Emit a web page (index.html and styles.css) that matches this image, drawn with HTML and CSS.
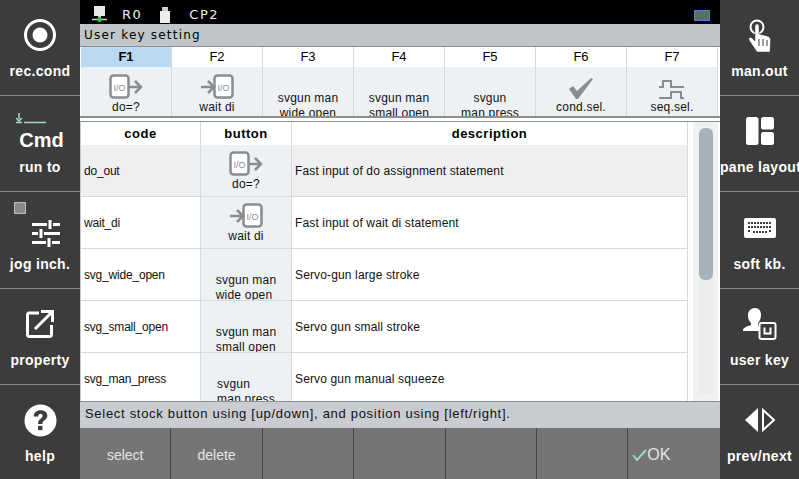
FILE: index.html
```html
<!DOCTYPE html>
<html lang="en">
<head>
    <meta charset="UTF-8">
    <title>User key setting</title>
    <link rel="stylesheet" href="styles.css">
</head>
<body>
<div class="screen">
    <div class="side">
        <div class="side-btn">
            <svg class="ic-rec" width="34" height="34" viewBox="0 0 34 34"><circle cx="17" cy="17" r="14.500" fill="none" stroke="#fff" stroke-width="3"/><circle cx="17" cy="17" r="7.500" fill="#fff"/></svg>
            <span>rec.cond</span>
        </div>
        <div class="side-btn">
            <svg class="run-mark" width="32" height="12" viewBox="0 0 32 12"><path d="M3 0v6M0 5l3 3 3-3M0 9.500H6M8 9.500H30" fill="none" stroke="#a5d8c0" stroke-width="1.500"/></svg>
            <b class="cmd">Cmd</b>
            <span>run to</span>
        </div>
        <div class="side-btn tall">
            <i class="jog-box"></i>
            <svg class="ic-jog" width="28" height="27" viewBox="0 0 28 27"><path d="M0 4.500H15M21 4.500H28M18 0V9M0 13.500H6M12 13.500H28M9 9V18M0 22.500H14M20 22.500H28M17 18V27" fill="none" stroke="#fff" stroke-width="3"/></svg>
            <span>jog inch.</span>
        </div>
        <div class="side-btn">
            <svg class="ic-prop" width="28" height="28" viewBox="0 0 28 28"><path d="M13 3H3a1.500 1.500 0 0 0-1.500 1.500V25A1.500 1.500 0 0 0 3 26.500h21a1.500 1.500 0 0 0 1.500-1.500V15" fill="none" stroke="#fff" stroke-width="3"/><path d="M9 19L25 3M15 1.500H26.500V12" fill="none" stroke="#fff" stroke-width="3"/></svg>
            <span>property</span>
        </div>
        <div class="side-btn">
            <svg class="ic-help" width="33" height="33" viewBox="0 0 34 34"><circle cx="17" cy="17" r="16.500" fill="#fff"/><path d="M10 13c0-4 3-6.500 7.200-6.500 4.100 0 6.800 2.400 6.800 5.700 0 4.300-5 4.500-5 8.300h-4.500c0-5.200 4.700-5.500 4.700-8.300 0-1.300-.9-2.200-2.200-2.200-1.400 0-2.300 1-2.400 3z" fill="#3c3c3c"/><rect x="14.500" y="22.500" width="4.500" height="4.500" fill="#3c3c3c"/></svg>
            <span>help</span>
        </div>
    </div>

    <div class="main">
        <div class="topbar">
            <svg width="15" height="16" viewBox="0 0 15 16"><rect x="2" y="0" width="11" height="10" fill="#e8e8e8"/><rect x="6" y="10" width="3" height="3" fill="#ccc"/><path d="M0 13.500H15" stroke="#ccc" stroke-width="1.500"/><circle cx="7.500" cy="13.500" r="2.500" fill="#22c83a"/></svg>
            <span class="top-r">R0</span>
            <svg class="top-usb" width="10" height="16" viewBox="0 0 10 16"><rect x="2" y="0" width="6" height="4" fill="#ccc"/><rect x="0" y="4" width="10" height="12" fill="#eee"/></svg>
            <span class="top-cp">CP2</span>
            <i class="top-mem"></i>
        </div>
        <div class="title">User key setting</div>

        <div class="tabs">
            <div class="tab on"><div class="tab-key">F1</div><div class="tab-body">
                <svg class="tab-svg" width="34" height="26" viewBox="0 0 34 26"><rect x="1.500" y="1.500" width="18" height="22" rx="3" fill="#fff" stroke="#8a8c90" stroke-width="2.500"/><text x="10.500" y="17" text-anchor="middle" class="io-text">I/O</text><path d="M20 13H32M26 7l6 6-6 6" fill="none" stroke="#8a8c90" stroke-width="2.500"/></svg>
                <em>do=?</em></div></div>
            <div class="tab"><div class="tab-key">F2</div><div class="tab-body">
                <svg class="tab-svg" width="34" height="26" viewBox="0 0 34 26"><rect x="14.500" y="1.500" width="18" height="22" rx="3" fill="#fff" stroke="#8a8c90" stroke-width="2.500"/><text x="23.500" y="17" text-anchor="middle" class="io-text">I/O</text><path d="M1 13H14M8 7l6 6-6 6" fill="none" stroke="#8a8c90" stroke-width="2.500"/></svg>
                <em>wait di</em></div></div>
            <div class="tab"><div class="tab-key">F3</div><div class="tab-body"><em class="two">svgun man<br>wide open</em></div></div>
            <div class="tab"><div class="tab-key">F4</div><div class="tab-body"><em class="two">svgun man<br>small open</em></div></div>
            <div class="tab"><div class="tab-key">F5</div><div class="tab-body"><em class="two">svgun<br>man press</em></div></div>
            <div class="tab"><div class="tab-key">F6</div><div class="tab-body"><svg class="tab-svg" width="26" height="22" viewBox="0 0 26 22"><path d="M1 11l4-3 4 5L23 0l2 1L10 21H8z" fill="#8a8c90"/></svg><em>cond.sel.</em></div></div>
            <div class="tab"><div class="tab-key">F7</div><div class="tab-body"><svg class="tab-svg" width="26" height="20" viewBox="0 0 26 20"><path d="M0 7H4V1H12V7H25M0 18H12V12H22V18H25" fill="none" stroke="#8a8c90" stroke-width="2"/></svg><em>seq.sel.</em></div></div>
        </div>

        <div class="list">
            <div class="table">
                <div class="head"><div>code</div><div>button</div><div>description</div></div>
                <div class="row sel">
                    <div class="c-code">do_out</div>
                    <div class="c-btn">
                        <svg class="tab-svg" width="34" height="26" viewBox="0 0 34 26"><rect x="1.500" y="1.500" width="18" height="22" rx="3" fill="#fff" stroke="#8a8c90" stroke-width="2.500"/><text x="10.500" y="17" text-anchor="middle" class="io-text">I/O</text><path d="M20 13H32M26 7l6 6-6 6" fill="none" stroke="#8a8c90" stroke-width="2.500"/></svg>
                        <em>do=?</em>
                    </div>
                    <div class="c-desc">Fast input of do assignment statement</div>
                </div>
                <div class="row">
                    <div class="c-code">wait_di</div>
                    <div class="c-btn">
                        <svg class="tab-svg" width="34" height="26" viewBox="0 0 34 26"><rect x="14.500" y="1.500" width="18" height="22" rx="3" fill="#fff" stroke="#8a8c90" stroke-width="2.500"/><text x="23.500" y="17" text-anchor="middle" class="io-text">I/O</text><path d="M1 13H14M8 7l6 6-6 6" fill="none" stroke="#8a8c90" stroke-width="2.500"/></svg>
                        <em>wait di</em>
                    </div>
                    <div class="c-desc">Fast input of wait di statement</div>
                </div>
                <div class="row">
                    <div class="c-code">svg_wide_open</div>
                    <div class="c-btn"><em class="two">svgun man<br>wide open</em></div>
                    <div class="c-desc">Servo-gun large stroke</div>
                </div>
                <div class="row">
                    <div class="c-code">svg_small_open</div>
                    <div class="c-btn"><em class="two">svgun man<br>small open</em></div>
                    <div class="c-desc">Servo gun small stroke</div>
                </div>
                <div class="row">
                    <div class="c-code">svg_man_press</div>
                    <div class="c-btn"><em class="two">svgun<br>man press</em></div>
                    <div class="c-desc">Servo gun manual squeeze</div>
                </div>
            </div>
            <div class="scroll"><div class="track"><div class="thumb"></div></div></div>
        </div>

        <div class="status">Select stock button using [up/down], and position using [left/right].</div>

        <div class="bottom">
            <div>select</div>
            <div>delete</div>
            <div></div>
            <div></div>
            <div></div>
            <div></div>
            <div class="ok"><svg width="15" height="12" viewBox="0 0 15 12"><path d="M1 6l4 5L14 1" fill="none" stroke="#9fd4bd" stroke-width="2"/></svg>OK</div>
        </div>
    </div>

    <div class="side">
        <div class="side-btn">
            <svg class="ic-hand" width="22" height="34" viewBox="0 0 22 34"><circle cx="8" cy="8" r="6.500" fill="none" stroke="#fff" stroke-width="2"/><path d="M6 7a2 2 0 0 1 4 0V15l8 2c2 .6 3.500 2 3.500 4l-.5 12H8L0 21c-1-2 1-3.500 3-2l3 3z" fill="#fff" stroke="#3c3c3c" stroke-width=".5"/><path d="M10 20v7M14 20v7M18 21v6" stroke="#3c3c3c"/></svg>
            <span>man.out</span>
        </div>
        <div class="side-btn">
            <svg class="ic-pane" width="28" height="28" viewBox="0 0 28 28"><rect x="0" y="0" width="12.500" height="28" rx="2.500" fill="#fff"/><rect x="15" y="0" width="13" height="12.500" rx="2.500" fill="#fff"/><rect x="15" y="15" width="13" height="13" rx="2.500" fill="#fff"/></svg>
            <span>pane layout</span>
        </div>
        <div class="side-btn tall">
            <svg class="ic-kb" width="32" height="20" viewBox="0 0 32 20"><rect width="32" height="20" rx="2" fill="#fff"/><path d="M4 5H28M4 9H28M4 13H7M9 14H23M25 13H28" stroke="#3c3c3c" stroke-width="2" stroke-dasharray="2 1"/></svg>
            <span>soft kb.</span>
        </div>
        <div class="side-btn">
            <svg class="ic-user" width="34" height="33" viewBox="0 0 34 33"><path d="M12 0c4 0 6 3 6 7s-2 7-3 8v3l2 1v4H0c0-3 2-4 8-6v-2c-2-2-3-4-3-8 0-4 3-7 7-7z" fill="#fff"/><rect x="16.500" y="15" width="16" height="16" rx="2" fill="#3c3c3c" stroke="#fff" stroke-width="2"/><path d="M21.500 19.500v6h6v-6" fill="none" stroke="#fff" stroke-width="2"/></svg>
            <span>user key</span>
        </div>
        <div class="side-btn">
            <svg class="ic-prev" width="32" height="24" viewBox="0 0 32 24"><path d="M14 0v24L1 12z" fill="#fff"/><path d="M19 2v20l11-10z" fill="none" stroke="#fff" stroke-width="2"/></svg>
            <span>prev/next</span>
        </div>
    </div>
</div>
</body>
</html>
```

FILE: styles.css
```css
html, body {
    margin: 0;
    padding: 0;
    background: #000;
}
.screen {
    display: flex;
    width: 799px;
    height: 479px;
    overflow: hidden;
    font-family: "Liberation Sans", Arial, sans-serif;
}
.io-text {
    font-family: "Liberation Sans", sans-serif;
    font-size: 9px;
    fill: #8a8c90;
}

/* side buttons */
.side {
    width: 80px;
    flex: none;
    display: flex;
    flex-direction: column;
    background: #3c3c3c;
}
.main + .side {
    width: 79px;
}
.side-btn {
    position: relative;
    height: 96px;
    flex: none;
    box-sizing: border-box;
    display: flex;
    flex-direction: column;
    align-items: center;
    color: #fff;
    font-size: 14px;
    font-weight: bold;
    border-bottom: 1px solid #888;
}
.side-btn.tall {
    height: 97px;
}
.side-btn:last-child {
    border-bottom: none;
}
.side-btn span {
    position: absolute;
    top: 63px;
    left: 0;
    right: 0;
    text-align: center;
    white-space: nowrap;
    letter-spacing: 0.3px;
}
.side-btn.tall span {
    top: 64px;
}
.side-btn svg {
    flex: none;
}
.ic-rec { margin-top: 18px; }
.ic-jog { margin-top: 28px; margin-left: 12px; }
.ic-prop { margin-top: 21px; }
.ic-help { margin-top: 19px; }
.ic-hand { margin-top: 19px; }
.ic-pane { margin-top: 21px; }
.ic-kb { margin-top: 26px; }
.ic-user { margin-top: 19px; }
.ic-prev { margin-top: 23px; }
.side-btn .run-mark {
    position: absolute;
    left: 16px;
    top: 17px;
}
.cmd {
    font-size: 20px;
    margin-top: 33px;
    margin-left: 3px;
}
.jog-box {
    position: absolute;
    left: 14px;
    top: 10px;
    width: 10px;
    height: 10px;
    background: #8a8a8e;
    border: 1px solid #bbb;
}

/* middle */
.main {
    width: 640px;
    flex: none;
    display: flex;
    flex-direction: column;
    background: #fff;
}
.topbar {
    height: 24px;
    flex: none;
    box-sizing: border-box;
    display: flex;
    align-items: center;
    background: #000;
    color: #eee;
    font-family: "DejaVu Sans", sans-serif;
    font-size: 13px;
    padding: 4px 0 0 12px;
}
.top-r {
    margin-left: 15px;
    letter-spacing: 1.5px;
}
.top-usb {
    margin-left: 18px;
    margin-top: 2px;
}
.top-cp {
    margin-left: 19px;
    letter-spacing: 1.5px;
}
.top-mem {
    margin-left: auto;
    margin-right: 10px;
    width: 14px;
    height: 9px;
    margin-top: 2px;
    border: 1px solid #5a7ad0;
    background: repeating-linear-gradient(90deg, #4a7a50 0 2px, #666 2px 3px);
}
.title {
    height: 23px;
    flex: none;
    box-sizing: border-box;
    background: #c0c5c9;
    border-bottom: 1px solid #8e9194;
    font-family: "DejaVu Sans", sans-serif;
    font-size: 12px;
    letter-spacing: 1.2px;
    line-height: 22px;
    padding-left: 4px;
    color: #000;
}
.tabs {
    height: 71px;
    flex: none;
    box-sizing: border-box;
    display: flex;
    border-bottom: 2px solid #8e9194;
    padding-left: 1px;
    padding-right: 2px;
}
.tab {
    width: 91px;
    flex: none;
    box-sizing: border-box;
    border-right: 1px solid #d6d8da;
    display: flex;
    flex-direction: column;
    text-align: center;
    height: 69px;
}
.tab-key {
    height: 20px;
    flex: none;
    line-height: 19px;
    font-size: 13px;
    color: #000;
}
.tab.on .tab-key {
    background: #b9daf2;
    font-weight: bold;
}
.tab-body, .c-btn {
    flex: 1;
    min-height: 0;
    background: #eef1f4;
    display: flex;
    flex-direction: column;
    align-items: center;
    justify-content: flex-end;
    overflow: hidden;
}
.tab-body em, .c-btn em {
    font-style: normal;
    font-size: 12px;
    line-height: 15px;
    color: #111;
    letter-spacing: 0.2px;
    white-space: nowrap;
}
.tab-body em {
    margin-bottom: 1px;
}
.tab-body em.two {
    margin-bottom: -5px;
}
.c-btn {
    padding-bottom: 4px;
}
.c-btn:has(.two) {
    padding-bottom: 0;
}
.c-btn em.two {
    margin-bottom: -3px;
}
.tab-svg {
    flex: none;
    margin-bottom: 0;
}

/* list */
.list {
    height: 280px;
    flex: none;
    box-sizing: border-box;
    margin-top: 3px;
    border-top: 1px solid #8e9194;
    border-left: 1px solid #c8cacc;
    display: flex;
    overflow: hidden;
}
.table {
    width: 607px;
    flex: none;
    overflow: hidden;
}
.head, .row {
    display: grid;
    grid-template-columns: 120px 91px 396px;
}
.head {
    height: 23px;
    line-height: 23px;
    font-size: 13px;
    font-weight: bold;
    text-align: center;
    letter-spacing: 0.5px;
}
.head div {
    border-right: 1px solid #d6d8da;
}
.row {
    height: 52px;
    box-sizing: border-box;
    border-bottom: 1px solid #d6d8da;
    font-size: 12px;
    color: #111;
}
.row > div {
    border-right: 1px solid #d6d8da;
    box-sizing: border-box;
}
.row.sel .c-code, .row.sel .c-desc {
    background: #efefef;
}
.c-code, .c-desc {
    padding: 17px 0 0 3px;
    line-height: 18px;
}
.c-code {
    letter-spacing: -0.2px;
}
.c-desc {
    letter-spacing: 0.14px;
}
.scroll {
    flex: 1;
    margin-left: 5px;
    margin-right: 2px;
    background: #f1f1f1;
    padding: 6px 5px 7px 6px;
}
.track {
    height: 100%;
    background: #ececec;
}
.thumb {
    height: 152px;
    border-radius: 6px;
    background: #a5b2ba;
}
.status {
    height: 27px;
    flex: none;
    box-sizing: border-box;
    background: #c9ccd1;
    border-top: 1px solid #8e9194;
    font-size: 13px;
    letter-spacing: 0.7px;
    line-height: 23px;
    padding-left: 5px;
    color: #111;
}
.bottom {
    flex: 1;
    display: flex;
    background: #757575;
}
.bottom div {
    width: 91.400px;
    flex: none;
    box-sizing: border-box;
    border-right: 1px solid #444;
    text-align: center;
    line-height: 54px;
    color: #e4e4e4;
    font-size: 14px;
}
.bottom .ok {
    border-right: none;
    font-size: 16px;
    text-align: left;
    padding-left: 4px;
}
.ok svg {
    vertical-align: -1px;
}
```
